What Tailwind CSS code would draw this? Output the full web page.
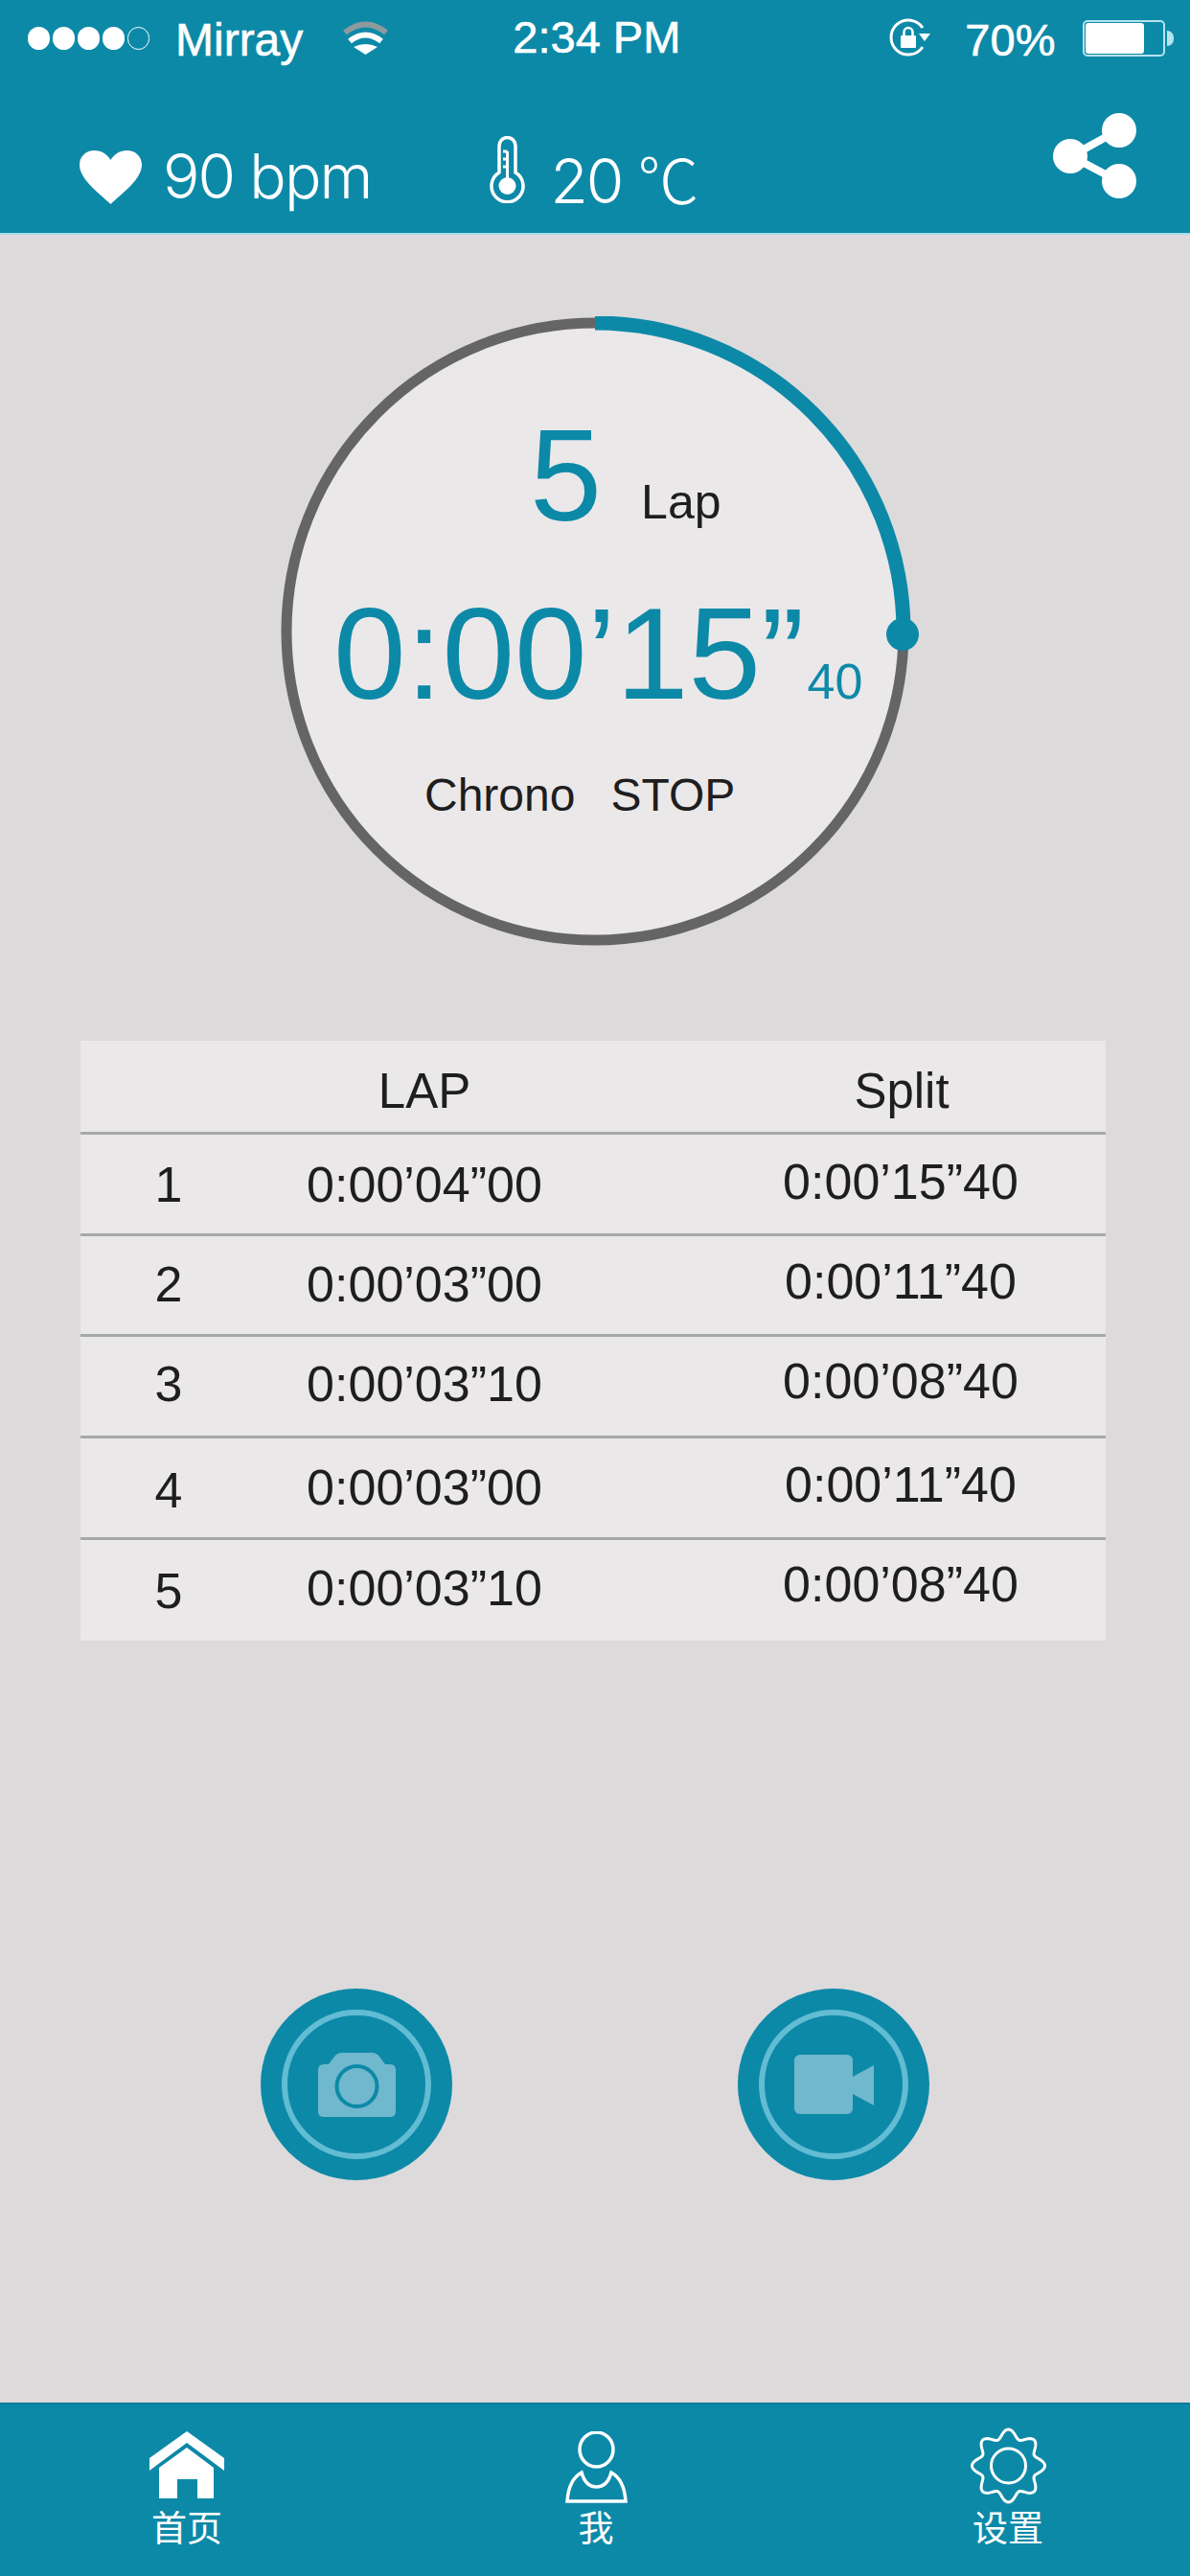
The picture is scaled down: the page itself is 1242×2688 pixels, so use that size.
<!DOCTYPE html>
<html lang="en">

<head>
  <meta charset="UTF-8">
  <title>Chrono</title>
  <script src="https://cdn.jsdelivr.net/npm/@tailwindcss/browser@4"></script>
</head>

<body class="w-[1242px] h-[2688px] overflow-hidden bg-[#dddadb] text-[#1e1e1e] font-['Liberation_Sans','Noto_Sans_CJK_SC',sans-serif]">
  <div class="flex flex-col h-full">

    <!-- Header -->
    <header class="h-[245px] shrink-0 bg-[#0d89a8] text-white border-b-2 border-[#a8dbe8]">
      <!-- Status bar -->
      <div class="flex items-start h-[76px] text-[47px] leading-[46px] [-webkit-text-stroke:0.6px_white]">
        <div class="flex gap-[3px] ml-[29px] mt-[28px]">
          <span class="w-[23px] h-[24px] rounded-full bg-white"></span>
          <span class="w-[23px] h-[24px] rounded-full bg-white"></span>
          <span class="w-[23px] h-[24px] rounded-full bg-white"></span>
          <span class="w-[23px] h-[24px] rounded-full bg-white"></span>
          <span class="w-[23px] h-[24px] rounded-full border-[1.5px] border-white"></span>
        </div>
        <span class="ml-[27px] mt-[19px] text-[48px]">Mirray</span>
        <svg class="ml-[41px] mt-[21px]" width="49" height="36" viewBox="0 0 49 36" fill="none">
          <path d="M3 13Q24.5 -4 46 13" stroke="#8f9a9c" stroke-width="6" />
          <path d="M8 22Q24.5 9 41 22" stroke="#fff" stroke-width="6" />
          <path d="M24.5 36L12 28Q24.5 22 37 28Z" fill="#fff" />
        </svg>
        <span class="ml-[129px] mt-[16px]">2:34 PM</span>
        <svg class="ml-[218px] mt-[19px]" width="44" height="40" viewBox="0 0 44 40" fill="none" stroke="#fff">
          <path d="M35 10A18 18 0 1 0 35 30" stroke-width="3" />
          <path d="M31 16H43L37 24Z" fill="#fff" stroke="none" />
          <rect x="12" y="18" width="16" height="13" rx="1" fill="#fff" stroke="none" />
          <path d="M15.5 18V14.5A4.5 4.5 0 0 1 24.5 14.5V18" stroke-width="2.5" />
        </svg>
        <span class="ml-[35px] mt-[19px]">70%</span>
        <div class="flex items-center ml-[29px] mt-[21px]">
          <div class="w-[86px] h-[38px] rounded-[5px] border-2 border-[#b5e3ee] p-px pr-[20px]">
            <div class="h-full rounded-[3px] bg-white"></div>
          </div>
          <span class="w-[7px] h-[16px] ml-[2px] rounded-r-full bg-[#b5e3ee]"></span>
        </div>
      </div>

      <!-- Sensors -->
      <div class="flex items-start h-[167px] text-[64px] leading-[64px] tracking-[-0.03em] font-['Inter'] font-light">
        <svg class="ml-[83px] mt-[81px]" width="65" height="56" viewBox="0 0 65 56" fill="#fff">
          <path d="M32.5 56C20 44 0 30 0 15C0 6 7 0 15.5 0C23 0 29 4 32.5 10C36 4 42 0 49.5 0C58 0 65 6 65 15C65 30 45 44 32.5 56Z" />
        </svg>
        <span class="ml-[22px] mt-[76px]">90 bpm</span>
        <svg class="ml-[124px] mt-[66px]" width="37" height="70" viewBox="0 0 37 70" fill="none" stroke="#fff">
          <path d="M10 38V10A8.5 8.5 0 0 1 27 10V38A16.5 16.5 0 1 1 10 38Z" stroke-width="3.5" />
          <circle cx="18.5" cy="52" r="9" fill="#fff" stroke="none" />
          <path d="M18.5 50V16M18.5 16H14M18.5 24H14M18.5 32H14" stroke-width="3" />
        </svg>
        <span class="flex items-baseline ml-[26px] mt-[76px] h-[64px]">20&nbsp;<span class="font-['Noto_Sans_CJK_SC'] leading-[64px]">℃</span></span>
        <svg class="ml-auto mr-[56px] mt-[42px]" width="88" height="89" viewBox="0 0 88 89" fill="#fff">
          <path d="M69 18L20 45L69 71" fill="none" stroke="#fff" stroke-width="8" />
          <circle cx="70" cy="18" r="18" />
          <circle cx="19" cy="45" r="18" />
          <circle cx="70" cy="71" r="18" />
        </svg>
      </div>
    </header>

    <main class="flex-1 flex flex-col">
      <!-- Chrono dial -->
      <section class="relative w-[658px] h-[658px] ml-[293px] mt-[85px]">
        <svg class="absolute inset-0" width="672" height="658" viewBox="0 0 672 658" fill="none">
          <circle cx="328" cy="329" r="322" fill="#ebe8e9" stroke="#656565" stroke-width="11" />
          <path d="M328 7A322 322 0 0 1 650 329" stroke="#0d89a8" stroke-width="15" />
          <circle cx="649" cy="332" r="17" fill="#0d89a8" />
        </svg>
        <div class="relative flex flex-col pt-[99px]">
          <div class="flex items-start pl-[260px]">
            <span class="text-[135px] leading-[135px] text-[#0d89a8]">5</span>
            <span class="ml-[41px] mt-[70px] text-[50px] leading-[50px]">Lap</span>
          </div>
          <div class="flex items-baseline mt-[49px] pl-[55px] text-[#0d89a8] whitespace-nowrap">
            <span class="text-[136px] leading-[138px]">0:00’15”</span>
            <span class="ml-[3px] text-[52px] leading-[50px]">40</span>
          </div>
          <div class="flex mt-[55px] pl-[150px] gap-[37px] text-[48px] leading-[47px]">
            <span>Chrono</span>
            <span>STOP</span>
          </div>
        </div>
      </section>

      <!-- Lap table -->
      <section class="w-[1070px] ml-[84px] mt-[98px] bg-[#ebe8e9] text-[52px] leading-[50px] text-center">
        <div class="grid grid-cols-[184px_350px_1fr] h-[98px] border-b-[3px] border-[#a6a9a9] text-[51px]">
          <span></span>
          <span class="mt-[28px]">LAP</span>
          <span class="pl-[110px] mt-[28px]">Split</span>
        </div>
        <div class="grid grid-cols-[184px_350px_1fr] h-[106px] border-b-[3px] border-[#a6a9a9]">
          <span class="mt-[27px]">1</span>
          <span class="mt-[27px]">0:00’04”00</span>
          <span class="pl-[108px] mt-[24px]">0:00’15”40</span>
        </div>
        <div class="grid grid-cols-[184px_350px_1fr] h-[105px] border-b-[3px] border-[#a6a9a9]">
          <span class="mt-[25px]">2</span>
          <span class="mt-[25px]">0:00’03”00</span>
          <span class="pl-[108px] mt-[22px]">0:00’11”40</span>
        </div>
        <div class="grid grid-cols-[184px_350px_1fr] h-[106px] border-b-[3px] border-[#a6a9a9]">
          <span class="mt-[24px]">3</span>
          <span class="mt-[24px]">0:00’03”10</span>
          <span class="pl-[108px] mt-[21px]">0:00’08”40</span>
        </div>
        <div class="grid grid-cols-[184px_350px_1fr] h-[106px] border-b-[3px] border-[#a6a9a9]">
          <span class="mt-[29px]">4</span>
          <span class="mt-[26px]">0:00’03”00</span>
          <span class="pl-[108px] mt-[23px]">0:00’11”40</span>
        </div>
        <div class="grid grid-cols-[184px_350px_1fr] h-[105px]">
          <span class="mt-[28px]">5</span>
          <span class="mt-[25px]">0:00’03”10</span>
          <span class="pl-[108px] mt-[21px]">0:00’08”40</span>
        </div>
      </section>

      <!-- Capture buttons -->
      <section class="flex justify-center gap-[298px] mt-[363px]">
        <button class="flex items-center justify-center w-[200px] h-[200px] rounded-full bg-[#0d89a8]">
          <span class="flex items-center justify-center w-[156px] h-[156px] rounded-full border-[6px] border-[#62bcd3]">
            <svg width="81" height="67" viewBox="0 0 81 67">
              <path d="M6 12H11L17 4Q20 0 25 0H56Q61 0 64 4L70 12H75Q81 12 81 18V61Q81 67 75 67H6Q0 67 0 61V18Q0 12 6 12Z" fill="#70b8cd" />
              <circle cx="40.5" cy="35" r="21" fill="#70b8cd" stroke="#0d89a8" stroke-width="4" />
            </svg>
          </span>
        </button>
        <button class="flex items-center justify-center w-[200px] h-[200px] rounded-full bg-[#0d89a8]">
          <span class="flex items-center justify-center w-[156px] h-[156px] rounded-full border-[6px] border-[#62bcd3]">
            <svg width="83" height="62" viewBox="0 0 83 62" fill="#70b8cd">
              <rect width="61" height="62" rx="6" />
              <path d="M61 23L83 11V53L61 41Z" />
            </svg>
          </span>
        </button>
      </section>
    </main>

    <!-- Tab bar -->
    <nav class="flex h-[181px] shrink-0 bg-[#0d89a8] text-white text-[37px] leading-[37px] border-t-2 border-[#0b7b97]">
      <a class="flex flex-col items-center w-[390px]">
        <span class="h-[112px] pt-[28px]">
          <svg class="block" width="78" height="70" viewBox="0 0 78 70" fill="#fff">
            <path d="M39 0L78 28V41L39 12L0 41V28Z" />
            <path d="M39 17L67 38V70H50V50H29V70H10V38Z" />
          </svg>
        </span>
        <span>首页</span>
      </a>
      <a class="flex flex-col items-center w-[464px]">
        <span class="h-[112px] pt-[28px]">
          <svg class="block" width="65" height="75" viewBox="0 0 65 75" fill="none" stroke="#fff" stroke-width="3.5">
            <ellipse cx="32.5" cy="19" rx="17.5" ry="18" />
            <path d="M17 43C20 54 26 58 32.5 58C39 58 45 54 48 43C57 48 62 58 63 73H2C3 58 8 48 17 43Z" />
          </svg>
        </span>
        <span>我</span>
      </a>
      <a class="flex flex-col items-center w-[388px] pl-[8px]">
        <span class="h-[112px] pt-[24px]">
          <svg class="block" width="79" height="80" viewBox="0 0 79 80" fill="none" stroke="#fff" stroke-width="3">
            <path id="gearOutline" />
            <circle cx="39.5" cy="40" r="18" />
          </svg>
        </span>
        <span>设置</span>
      </a>
    </nav>
  </div>

  <script>
    // wavy gear outline, 8 teeth
    var d = '';
    for (var i = 0; i < 360; i += 2) {
      var a = i * Math.PI / 180;
      var r = 33.5 + 4.5 * Math.cos(8 * a);
      d += (i ? 'L' : 'M') + (39.5 + r * Math.sin(a)).toFixed(2) + ' ' + (40 - r * Math.cos(a)).toFixed(2);
    }
    document.getElementById('gearOutline').setAttribute('d', d + 'Z');
  </script>
</body>

</html>
